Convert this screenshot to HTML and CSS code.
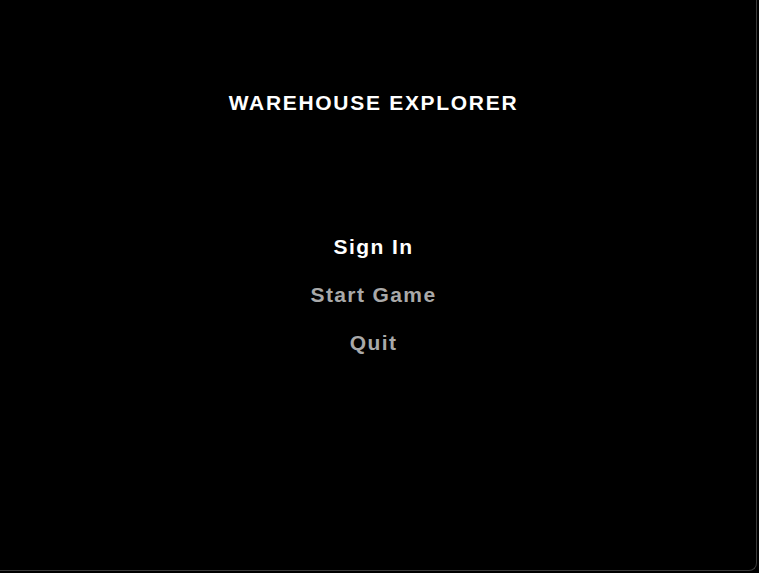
FILE: index.html
```html
<!DOCTYPE html>
<html lang="en">
<head>
  <meta charset="UTF-8" />
  <title>Warehouse Explorer</title>
  <link rel="stylesheet" href="styles.css">
</head>
<body>
  <div class="window">
    <div class="screen">
      <h1 class="title">WAREHOUSE EXPLORER</h1>
      <nav class="menu">
        <div class="menu-item active">Sign In</div>
        <div class="menu-item">Start Game</div>
        <div class="menu-item">Quit</div>
      </nav>
    </div>
  </div>
</body>
</html>
```

FILE: styles.css
```css
* {
  box-sizing: border-box;
  margin: 0;
  padding: 0;
}

body {
  background: #000;
  font-family: 'Liberation Sans', Arial, sans-serif;
  width: 759px;
  height: 573px;
  overflow: hidden;
}

.window {
  width: 757px;
  height: 571px;
  border-right: 1px solid #3c3c3c;
  border-bottom: 1px solid #3c3c3c;
  border-bottom-right-radius: 8px;
  background: #000;
}

.screen {
  width: 747px;
  display: flex;
  flex-direction: column;
  align-items: center;
  padding-top: 90px;
}

.title {
  color: #fff;
  font-size: 21px;
  font-weight: 700;
  letter-spacing: 1.7px;
  line-height: 26px;
}

.menu {
  margin-top: 118px;
  display: flex;
  flex-direction: column;
  align-items: center;
  gap: 22px;
}

.menu-item {
  color: #a9a9a9;
  font-size: 21px;
  font-weight: 700;
  letter-spacing: 1.4px;
  line-height: 26px;
}

.menu-item.active {
  color: #fff;
}
```
